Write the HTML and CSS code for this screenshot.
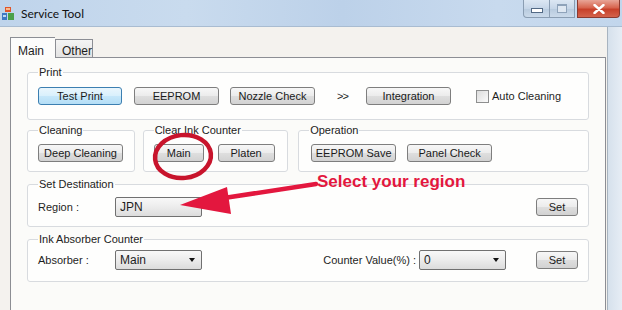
FILE: index.html
```html
<html lang="en">
<head>
    <meta charset="UTF-8">
    <title>Service Tool</title>
    <link rel="stylesheet" href="styles.css">
</head>
<body>
    <div class="window">
        <div class="titlebar">
            <svg class="app-icon" width="12" height="13" viewBox="0 0 12 13">
                <rect x="3" y="0" width="6" height="5" fill="#e0552a"/>
                <rect x="4" y="1" width="4" height="2" fill="#f7b98f"/>
                <rect x="0" y="6" width="5" height="7" fill="#3d78c4"/>
                <rect x="6" y="6" width="6" height="7" fill="#4aa04a"/>
                <rect x="1" y="8" width="3" height="2" fill="#bcd8f2"/>
            </svg>
            <span class="title">Service Tool</span>
            <div class="caption-buttons">
                <div class="cap cap-min"><span></span></div>
                <div class="cap cap-max"><span></span></div>
                <div class="cap cap-close">
                    <svg width="12" height="10" viewBox="0 0 12 10">
                        <path d="M1.5 1 L10.5 9 M10.5 1 L1.5 9" stroke="#fff" stroke-width="2.4" stroke-linecap="round"/>
                    </svg>
                </div>
            </div>
        </div>

        <div class="body">
            <div class="client">
                <div class="tabs">
                    <div class="tab active">Main</div>
                    <div class="tab">Other</div>
                </div>
                <div class="tabpage">
                    <fieldset class="group group-print">
                        <legend>Print</legend>
                        <div class="row">
                            <div class="btn btn-default w84">Test Print</div>
                            <div class="btn w85 ml12">EEPROM</div>
                            <div class="btn w85 ml11">Nozzle Check</div>
                            <span class="chevrons">&gt;&gt;</span>
                            <div class="btn w85 ml18">Integration</div>
                            <span class="checkbox"></span>
                            <span class="check-label">Auto Cleaning</span>
                        </div>
                    </fieldset>

                    <div class="group-row">
                        <fieldset class="group group-small g-cleaning">
                            <legend>Cleaning</legend>
                            <div class="row">
                                <div class="btn w85">Deep Cleaning</div>
                            </div>
                        </fieldset>
                        <fieldset class="group group-small g-clear">
                            <legend>Clear Ink Counter</legend>
                            <div class="row">
                                <div class="btn w50">Main</div>
                                <div class="btn w57 ml14">Platen</div>
                            </div>
                        </fieldset>
                        <fieldset class="group group-small g-operation">
                            <legend>Operation</legend>
                            <div class="row">
                                <div class="btn w85 ml2">EEPROM Save</div>
                                <div class="btn w85 ml11">Panel Check</div>
                            </div>
                        </fieldset>
                    </div>

                    <fieldset class="group group-dest">
                        <legend>Set Destination</legend>
                        <div class="row">
                            <span class="field-label">Region :</span>
                            <div class="combo"><span>JPN</span></div>
                            <div class="btn w42 push">Set</div>
                        </div>
                    </fieldset>

                    <fieldset class="group group-ink">
                        <legend>Ink Absorber Counter</legend>
                        <div class="row">
                            <span class="field-label">Absorber :</span>
                            <div class="combo"><span>Main</span><i class="arrow"></i></div>
                            <span class="counter-label push">Counter Value(%) :</span>
                            <div class="combo ml3"><span>0</span><i class="arrow"></i></div>
                            <div class="btn w42 ml30">Set</div>
                        </div>
                    </fieldset>
                </div>
            </div>
            <div class="frame-right"></div>
        </div>

        <!-- annotation drawn over the screenshot -->
        <svg class="annotation" width="622" height="310" viewBox="0 0 622 310">
            <ellipse cx="183" cy="156.5" rx="28" ry="21.5" transform="rotate(-6 183 156.5)" fill="none" stroke="#c8142c" stroke-width="4.5"/>
            <path d="M316 184 L224 198" stroke="#e3173e" stroke-width="4.5" stroke-linecap="round"/>
            <polygon points="180,205 227,187 231,214" fill="#e3173e"/>
        </svg>
        <div class="callout">Select your region</div>
    </div>
</body>
</html>
```
FILE: styles.css
```css
body {
    margin: 0;
    padding: 0;
    background-color: #f4f2ee;
    font-family: "Liberation Sans", Arial, sans-serif;
    font-size: 11px;
    color: #1e1e1e;
}
.window {
    position: relative;
    width: 622px;
    height: 310px;
    overflow: hidden;
}
.titlebar {
    height: 26px;
    display: flex;
    align-items: center;
    background: linear-gradient(90deg, #bfd4eb 0%, #c9dbee 30%, #bcd1e9 55%, #c8daee 80%, #c2d6ec 100%);
    border-bottom: 1px solid #a9bcd1;
}
.app-icon {
    margin-left: 2px;
    margin-top: 1px;
}
.title {
    margin-left: 7px;
    font-family: Lato, "Liberation Sans", sans-serif;
    font-size: 12px;
    color: #111;
}
.caption-buttons {
    margin-left: auto;
    margin-right: 2px;
    align-self: flex-start;
    display: flex;
}
.cap {
    height: 18px;
    box-sizing: border-box;
    border: 1px solid #8a9db2;
    border-top: none;
    display: flex;
    align-items: center;
    justify-content: center;
    background: linear-gradient(#dce7f3, #c6d6e8 50%, #b7cade 51%, #cbdaea);
}
.cap-min {
    width: 27px;
    border-radius: 0 0 0 4px;
}
.cap-min span {
    width: 10px;
    height: 3px;
    margin-top: 4px;
    background: #fff;
    border: 1px solid #536a85;
}
.cap-max {
    width: 25px;
    border-left: none;
}
.cap-max span {
    width: 8px;
    height: 6px;
    border: 1px solid #8fa3ba;
    border-top-width: 2px;
    background: #dfe8f2;
}
.cap-close {
    width: 43px;
    margin-left: 2px;
    border-color: #8a3a30;
    border-radius: 0 0 4px 0;
    background: linear-gradient(#e8a597, #d7654f 45%, #c7402a 55%, #d4634c);
}
.body {
    display: flex;
    height: 283px;
}
.client {
    width: 607px;
    padding: 10px 0 0 10px;
    box-sizing: border-box;
}
.tabs {
    display: flex;
    align-items: flex-end;
    height: 20px;
}
.tab {
    height: 18px;
    box-sizing: border-box;
    padding: 4px 6px 0;
    border: 1px solid #8c8e94;
    border-bottom: none;
    background: linear-gradient(#f4f4f4, #e3e3e3);
    font-size: 12px;
    width: 38px;
}
.tab.active {
    height: 21px;
    width: 45px;
    padding: 6px 0 0 7px;
    background: #fcfcfb;
    border-right: none;
    position: relative;
    bottom: -1px;
}
.tabpage {
    width: 596px;
    height: 260px;
    box-sizing: border-box;
    border: 1px solid #8c8e94;
    background-color: #fbfbf9;
    padding: 7px 16px 0 16px;
}
.group {
    margin: 0;
    min-width: 0;
    border: 1px solid #d8dbdf;
    border-radius: 3px;
    background-color: #fefefd;
    padding: 8px 10px 14px;
    width: 562px;
    box-sizing: border-box;
}
.group legend {
    padding: 0 1px;
    line-height: 14px;
    font-size: 11px;
    color: #222;
}
.row {
    display: flex;
    align-items: center;
}
.group-row {
    display: flex;
    gap: 8px;
    margin-top: 3px;
}
.group-small {
    padding: 7px 10px 9px;
}
.g-cleaning {
    width: 108px;
}
.g-clear {
    width: 146px;
}
.g-operation {
    width: 292px;
    margin-left: 2px;
}
.group-dest {
    margin-top: 5px;
    padding: 6px 10px 9px;
}
.group-ink {
    margin-top: 5px;
    padding: 4px 10px 11px;
}
.btn {
    height: 18px;
    box-sizing: border-box;
    border: 1px solid #7e7e7e;
    border-radius: 3px;
    background: linear-gradient(#f7f7f7 0%, #ececec 48%, #dedede 52%, #d2d2d2 100%);
    display: flex;
    align-items: center;
    justify-content: center;
    font-size: 11px;
    color: #1a1a1a;
}
.btn-default {
    border-color: #3c7fb1;
    background: linear-gradient(#eaf6fd 0%, #d9f0fc 48%, #c6e7fa 52%, #b4def6 100%);
}
.w42 { width: 42px; }
.w50 { width: 50px; }
.w57 { width: 57px; }
.w84 { width: 84px; }
.w85 { width: 85px; }
.ml2 { margin-left: 2px; }
.ml3 { margin-left: 3px; }
.ml11 { margin-left: 11px; }
.ml12 { margin-left: 12px; }
.ml14 { margin-left: 14px; }
.ml18 { margin-left: 18px; }
.ml30 { margin-left: 30px; }
.push { margin-left: auto; }
.chevrons {
    margin-left: 22px;
    width: 11px;
    font-size: 11px;
    letter-spacing: -1px;
}
.checkbox {
    width: 13px;
    height: 13px;
    box-sizing: border-box;
    margin-left: 25px;
    border: 1px solid #8e8f8f;
    background: linear-gradient(135deg, #dcdcdc, #fbfbfb);
}
.check-label {
    margin-left: 3px;
}
.field-label {
    width: 77px;
}
.combo {
    width: 87px;
    height: 20px;
    box-sizing: border-box;
    border: 1px solid #707070;
    border-radius: 2px;
    background: linear-gradient(#f8f8f8 0%, #ececec 50%, #dcdcdc 100%);
    display: flex;
    align-items: center;
    padding-left: 4px;
    font-size: 12px;
}
.combo .arrow {
    margin-left: auto;
    margin-right: 6px;
    width: 0;
    height: 0;
    border-left: 3.5px solid transparent;
    border-right: 3.5px solid transparent;
    border-top: 4px solid #111;
}
.counter-label {
    font-size: 11px;
}
.annotation {
    position: absolute;
    left: 0;
    top: 0;
    pointer-events: none;
}
.callout {
    position: absolute;
    left: 317px;
    top: 172px;
    font-family: "Liberation Sans", Arial, sans-serif;
    font-weight: bold;
    font-size: 17px;
    line-height: 19px;
    color: #e3173e;
}
.frame-right {
    flex: 1;
    background: linear-gradient(90deg, #d6e1ec, #e6edf5);
    border-left: 1px solid #a8b4c0;
}
```
